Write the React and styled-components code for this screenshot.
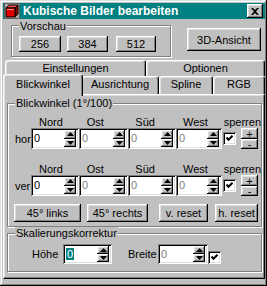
import styled, { createGlobalStyle } from "styled-components"

const GlobalStyle = createGlobalStyle`
  html, body {
    margin: 0;
    padding: 0;
    background: #c0c0c0;
  }
  body {
    font-family: "Liberation Sans", Arial, sans-serif;
    font-size: 11px;
    color: #000;
  }
`

const raised = `
  background: #c0c0c0;
  box-shadow: inset -1px -1px #000, inset 1px 1px #fff, inset -2px -2px #808080, inset 2px 2px #dfdfdf;
`

const sunken = `
  box-shadow: inset 1px 1px #808080, inset -1px -1px #fff, inset 2px 2px #000, inset -2px -2px #dfdfdf;
`

//Window frame
const Window = styled.div`
  width: 267px;
  height: 286px;
  box-sizing: border-box;
  padding: 3px 2px 3px 3px;
  background: #c0c0c0;
  box-shadow: inset -1px -1px #000, inset 1px 1px #dfdfdf, inset -2px -2px #808080, inset 2px 2px #fff;
  display: flex;
  flex-direction: column;
`

const TitleBar = styled.div`
  height: 16px;
  background: #008080;
  display: flex;
  align-items: center;
  padding: 0 2px 0 1px;
`

const Title = styled.div`
  flex: 1;
  margin-left: 3px;
  color: #fff;
  font-weight: bold;
  font-size: 12px;
  line-height: 16px;
  white-space: nowrap;
`

const CloseButton = styled.div`
  width: 16px;
  height: 14px;
  box-sizing: border-box;
  ${raised}
  display: flex;
  align-items: center;
  justify-content: center;
`

//Top area
const TopRow = styled.div`
  display: flex;
  align-items: flex-start;
  margin-top: 6px;
  padding-left: 8px;
`

const Group = styled.div`
  position: relative;
  box-sizing: border-box;
  width: ${p => p.$w}px;
  height: ${p => p.$h}px;
  margin-top: ${p => p.$mt || 0}px;
  border: 1px solid #808080;
  box-shadow: inset 1px 1px #fff, 1px 1px #fff;
  display: flex;
  flex-direction: column;
`

const Legend = styled.span`
  position: absolute;
  left: 7px;
  top: ${p => p.$top ?? -7}px;
  padding: 0 1px;
  background: #c0c0c0;
  line-height: 13px;
  white-space: nowrap;
`

const ButtonRow = styled.div`
  display: flex;
  margin-top: ${p => p.$mt}px;
  padding-left: ${p => p.$pl}px;
`

const Button = styled.div`
  box-sizing: border-box;
  width: ${p => p.$w}px;
  height: ${p => p.$h || 16}px;
  margin-left: ${p => p.$ml || 0}px;
  margin-top: ${p => p.$mt || 0}px;
  ${raised}
  display: flex;
  align-items: center;
  justify-content: center;
  line-height: 12px;
  white-space: nowrap;
`

//Tabs
const TabArea = styled.div`
  margin-top: 3px;
  display: flex;
  flex-direction: column;
`

const TabRow = styled.div`
  display: flex;
  align-items: flex-end;
  height: ${p => p.$h}px;
  padding-left: 2px;
`

const Tab = styled.div`
  position: relative;
  box-sizing: border-box;
  width: ${p => p.$w + (p.$active ? 4 : 0)}px;
  height: ${p => p.$h + (p.$active ? 4 : 0)}px;
  margin: ${p => (p.$active ? "0 -2px -2px -2px" : "0")};
  z-index: ${p => (p.$active ? 2 : 0)};
  background: #c0c0c0;
  border-left: 1px solid #fff;
  border-top: 1px solid #fff;
  border-right: 1px solid #000;
  border-radius: 3px 3px 0 0;
  box-shadow: inset -1px 0 #808080, inset 1px 1px #dfdfdf;
  display: flex;
  justify-content: center;
  padding-top: ${p => (p.$active ? 3 : 1)}px;
  line-height: 13px;
  white-space: nowrap;
`

const Panel = styled.div`
  position: relative;
  z-index: 1;
  box-sizing: border-box;
  height: 185px;
  border-left: 1px solid #fff;
  border-top: 1px solid #fff;
  border-right: 1px solid #000;
  border-bottom: 1px solid #000;
  box-shadow: inset -1px -1px #808080, inset 1px 1px #dfdfdf;
  padding: 8px 2px 0 3px;
  display: flex;
  flex-direction: column;
`

//Angle grid
const HeaderRow = styled.div`
  display: flex;
  height: 11px;
  line-height: 11px;
  margin-top: ${p => p.$mt}px;
  padding-left: 23px;
`

const Header = styled.div`
  box-sizing: border-box;
  width: ${p => p.$w}px;
  padding-left: 8px;
  white-space: nowrap;
`

const Sperren = styled.div`
  margin-left: 3px;
  white-space: nowrap;
`

const FieldRow = styled.div`
  display: flex;
  align-items: center;
  height: 21px;
  padding-left: 7px;
`

const RowLabel = styled.div`
  width: ${p => p.$w}px;
  margin-left: ${p => p.$ml || 0}px;
  white-space: nowrap;
`

const Field = styled.div`
  box-sizing: border-box;
  width: ${p => p.$w}px;
  height: ${p => p.$h || 21}px;
  background: #fff;
  ${sunken}
  padding: 2px 3px;
  display: flex;
  align-items: center;
`

const Value = styled.span`
  flex: 1;
  line-height: 13px;
  color: ${p => (p.$disabled ? "#808080" : "#000")};
`

const Selected = styled.span`
  background: #008080;
  color: #fff;
  padding: 0 1px;
`

const Arrows = styled.div`
  width: 12px;
  align-self: stretch;
  display: flex;
  flex-direction: column;
`

const ArrowButton = styled.div`
  flex: 1;
  ${raised}
  display: flex;
  align-items: center;
  justify-content: center;
`

const Check = styled.div`
  box-sizing: border-box;
  width: 13px;
  height: 13px;
  margin-left: ${p => p.$ml || 0}px;
  align-self: ${p => p.$align || "center"};
  background: #fff;
  ${sunken}
  display: flex;
  align-items: center;
  justify-content: center;
`

const PlusMinus = styled.div`
  width: 17px;
  height: 21px;
  margin-left: 5px;
  display: flex;
  flex-direction: column;
`

const PMButton = styled.div`
  box-sizing: border-box;
  height: ${p => p.$h}px;
  ${raised}
  display: flex;
  align-items: center;
  justify-content: center;
  line-height: 10px;
  font-size: 11px;
`

const ScaleRow = styled.div`
  display: flex;
  align-items: center;
  height: 20px;
  margin-top: 10px;
  padding-left: 24px;
`

const AppIcon = () => (
  <svg width="16" height="16" viewBox="0 0 16 16">
    <rect x="0" y="0" width="16" height="16" fill="#a8a8a8" />
    <rect x="0.5" y="0.5" width="15" height="15" fill="none" stroke="#606060" />
    <polygon points="2,5 5,2 14,2 11,5" fill="#ff5050" stroke="#000" strokeWidth="1" />
    <polygon points="11,5 14,2 14,11 11,14" fill="#900000" stroke="#000" strokeWidth="1" />
    <rect x="2" y="5" width="9" height="9" fill="#e00000" stroke="#000" strokeWidth="1" />
    <line x1="3" y1="6.5" x2="10" y2="6.5" stroke="#ff9090" />
  </svg>
)

const CloseX = () => (
  <svg width="8" height="7" viewBox="0 0 8 7">
    <path d="M0 0 L2 0 L4 2 L6 0 L8 0 L5 3.5 L8 7 L6 7 L4 5 L2 7 L0 7 L3 3.5 Z" fill="#000" />
  </svg>
)

const Arrow = ({ dir }) => (
  <svg width="7" height="4" viewBox="0 0 7 4">
    {dir === "up" ? <polygon points="3.5,0 7,4 0,4" fill="#000" /> : <polygon points="0,0 7,0 3.5,4" fill="#000" />}
  </svg>
)

const CheckMark = () => (
  <svg width="7" height="7" viewBox="0 0 7 7">
    <path d="M0.5 2.5 L2.5 4.8 L6.5 0.8" fill="none" stroke="#000" strokeWidth="2" />
  </svg>
)

const Spin = ({ w, h, value, disabled, selected }) => (
  <Field $w={w} $h={h}>
    <Value $disabled={disabled}>{selected ? <Selected>{value}</Selected> : value}</Value>
    <Arrows>
      <ArrowButton><Arrow dir="up" /></ArrowButton>
      <ArrowButton><Arrow dir="down" /></ArrowButton>
    </Arrows>
  </Field>
)

const columns = [
  { name: "Nord", w: 48 },
  { name: "Ost", w: 49 },
  { name: "Süd", w: 48 },
  { name: "West", w: 46 },
]

const AngleRow = ({ label, mt }) => (
  <>
    <HeaderRow $mt={mt}>
      {columns.map(c => (
        <Header key={c.name} $w={c.w}>{c.name}</Header>
      ))}
      <Sperren>sperren</Sperren>
    </HeaderRow>
    <FieldRow>
      <RowLabel $w={16}>{label}</RowLabel>
      {columns.map((c, i) => (
        <Spin key={c.name} w={c.w} value="0" disabled={i > 0} />
      ))}
      <Check $ml={1}><CheckMark /></Check>
      <PlusMinus>
        <PMButton $h={11}>+</PMButton>
        <PMButton $h={10}>-</PMButton>
      </PlusMinus>
    </FieldRow>
  </>
)

const App = () => {
  return (
    <>
      <GlobalStyle />
      <Window>
        <TitleBar>
          <AppIcon />
          <Title>Kubische Bilder bearbeiten</Title>
          <CloseButton><CloseX /></CloseButton>
        </TitleBar>

        <TopRow>
          <Group $w={160} $h={32}>
            <Legend $top={-6}>Vorschau</Legend>
            <ButtonRow $mt={10} $pl={7}>
              <Button $w={42}>256</Button>
              <Button $w={41} $ml={6}>384</Button>
              <Button $w={40} $ml={8}>512</Button>
            </ButtonRow>
          </Group>
          <Button $w={74} $h={23} $ml={16} $mt={3}>3D-Ansicht</Button>
        </TopRow>

        <TabArea>
          <TabRow $h={16}>
            <Tab $w={141} $h={16}>Einstellungen</Tab>
            <Tab $w={119} $h={16}>Optionen</Tab>
          </TabRow>
          <TabRow $h={18}>
            <Tab $w={76} $h={18} $active>Blickwinkel</Tab>
            <Tab $w={78} $h={18}>Ausrichtung</Tab>
            <Tab $w={54} $h={18}>Spline</Tab>
            <Tab $w={52} $h={18}>RGB</Tab>
          </TabRow>
          <Panel>
            <Group $h={124}>
              <Legend>Blickwinkel (1°/100)</Legend>
              <AngleRow label="hor" mt={13} />
              <AngleRow label="ver" mt={15} />
              <ButtonRow $mt={8} $pl={6}>
                <Button $w={67} $h={18}>45° links</Button>
                <Button $w={61} $h={18} $ml={6}>45° rechts</Button>
                <Button $w={49} $h={18} $ml={11}>v. reset</Button>
                <Button $w={43} $h={18} $ml={7}>h. reset</Button>
              </ButtonRow>
            </Group>
            <Group $h={39} $mt={6}>
              <Legend>Skalierungskorrektur</Legend>
              <ScaleRow>
                <RowLabel $w={31}>Höhe</RowLabel>
                <Spin w={49} h={20} value="0" selected />
                <RowLabel $w={30} $ml={16}>Breite</RowLabel>
                <Spin w={50} h={20} value="0" disabled />
                <Check $align="flex-end"><CheckMark /></Check>
              </ScaleRow>
            </Group>
          </Panel>
        </TabArea>
      </Window>
    </>
  )
}

export default App
